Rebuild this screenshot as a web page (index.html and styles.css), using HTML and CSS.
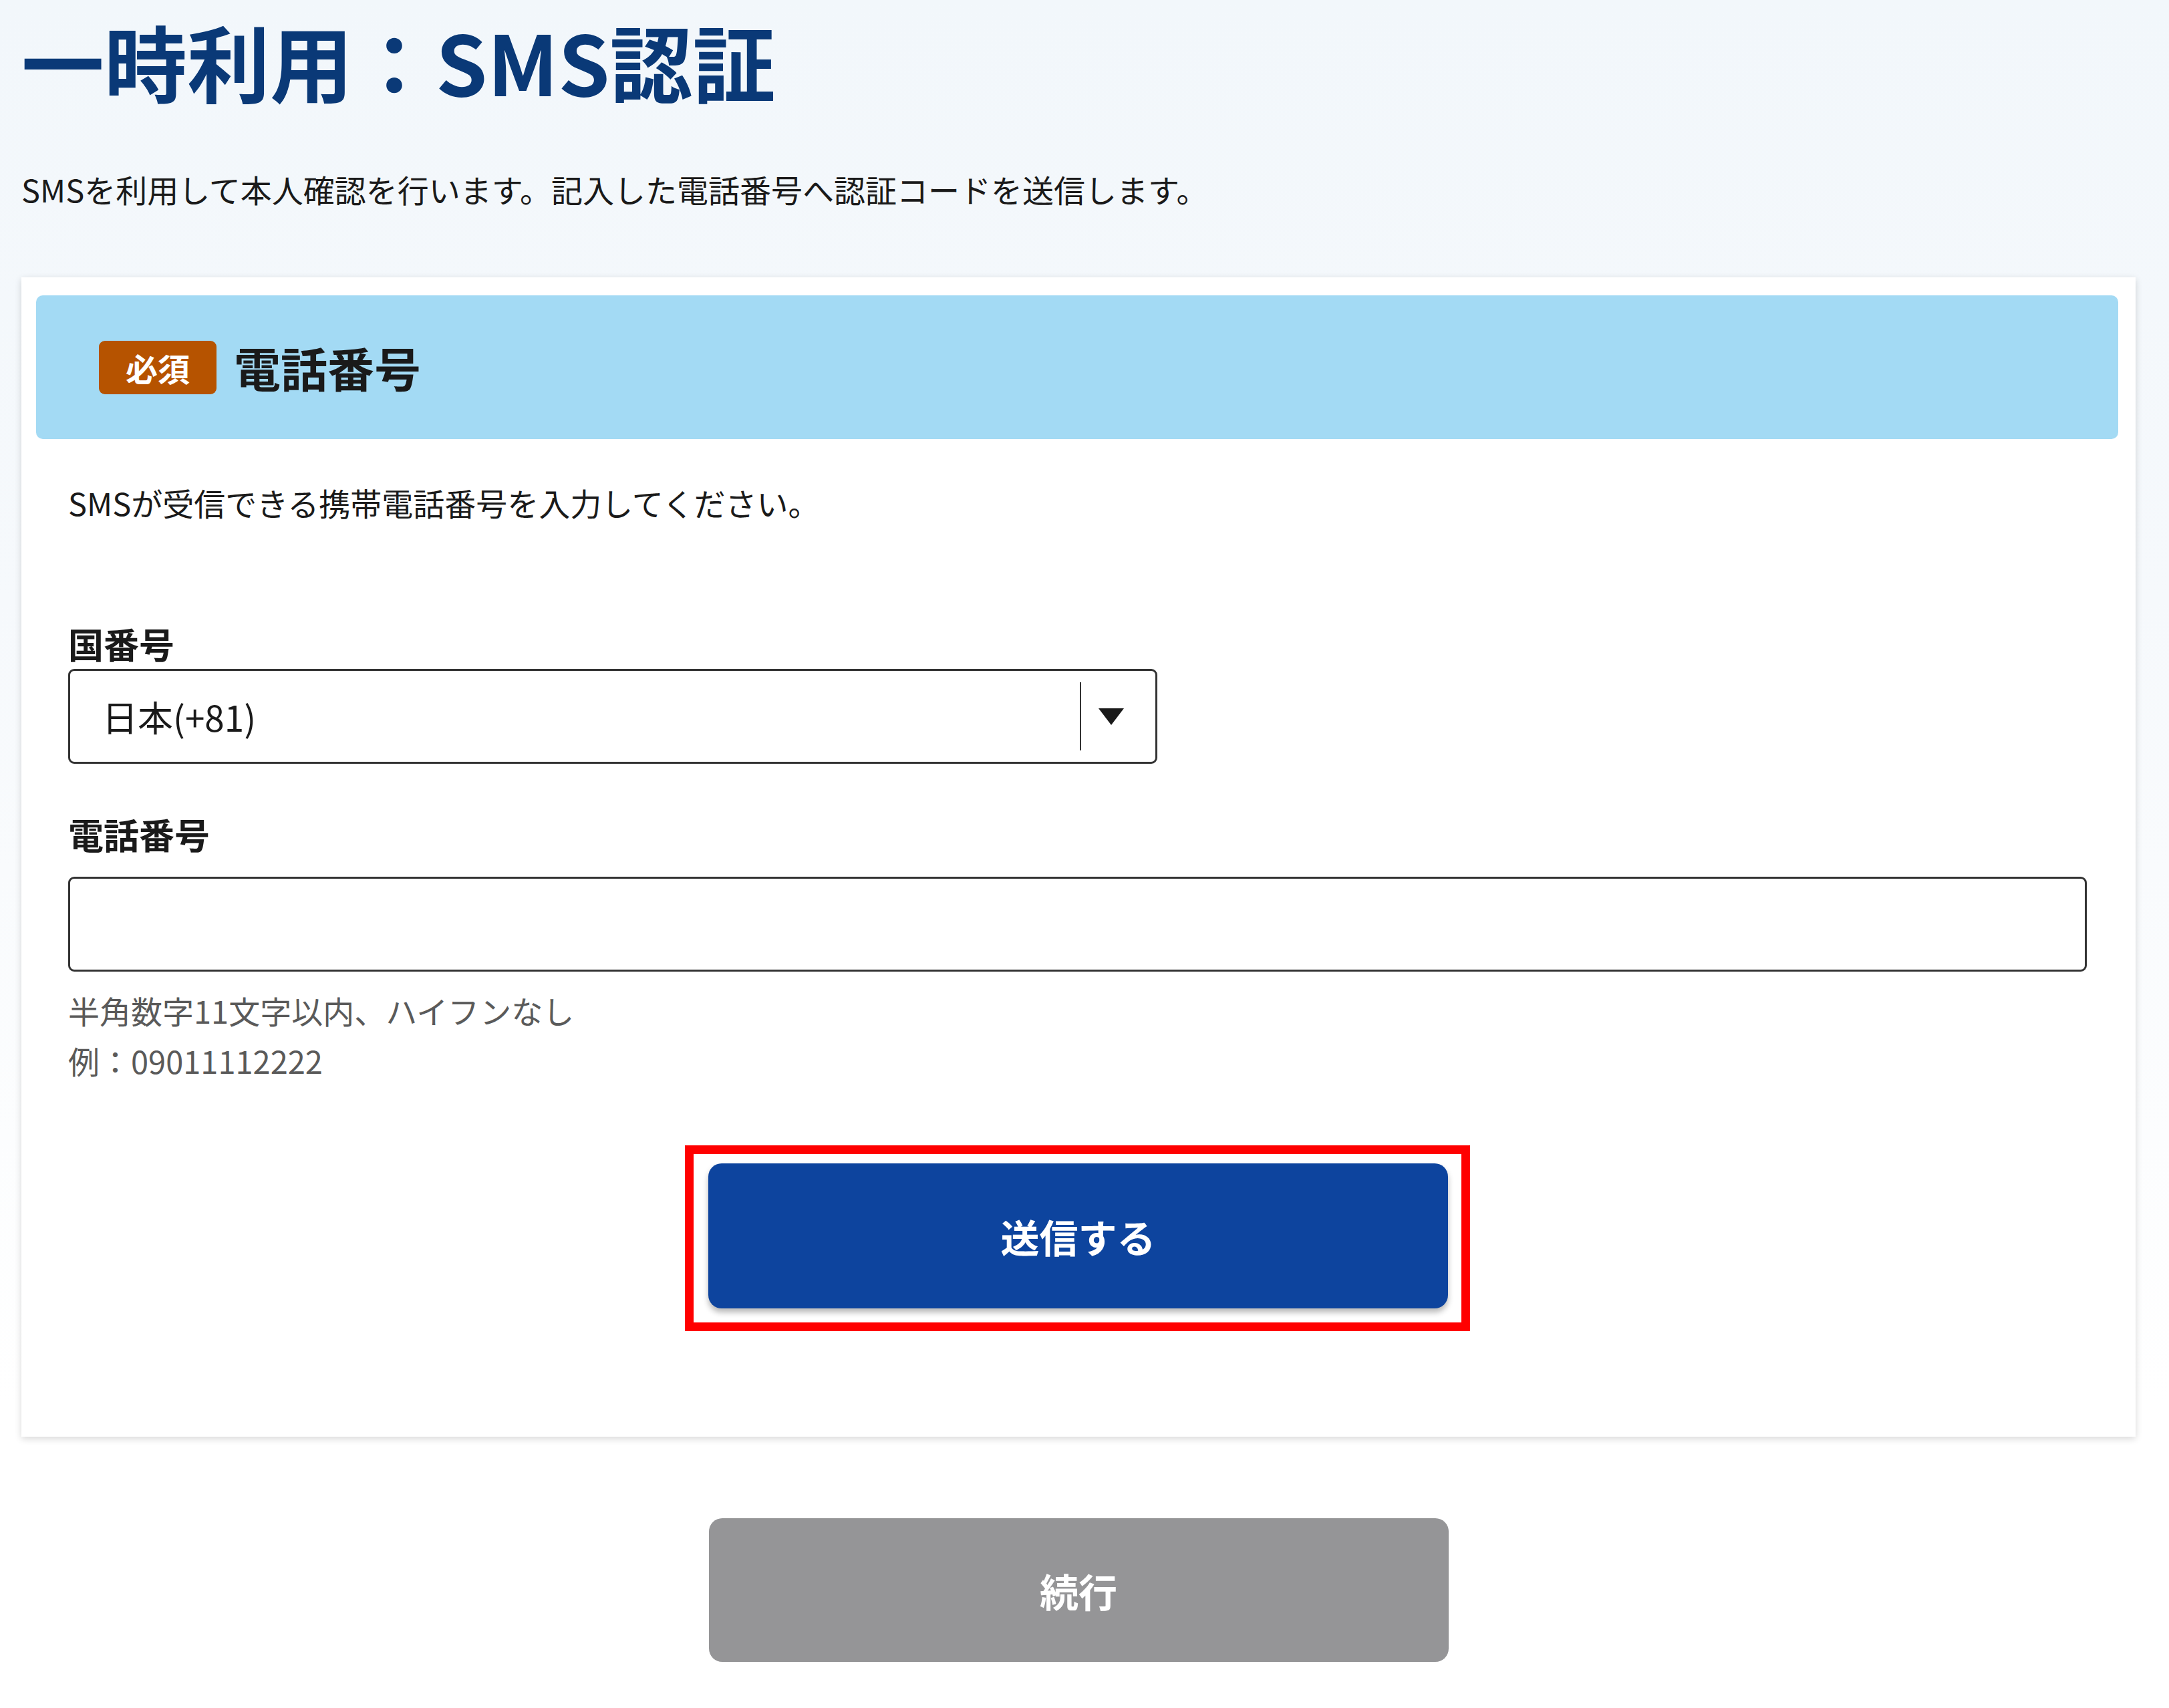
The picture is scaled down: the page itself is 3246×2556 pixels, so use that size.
FILE: index.html
```html
<!DOCTYPE html>
<html lang="ja">
<head>
<meta charset="utf-8" />
<title>一時利用：SMS認証</title>
<link rel="stylesheet" href="styles.css">
</head>
<body>
  <div class="page">
    <h1 class="title">一時利用：SMS認証</h1>
    <p class="lead">SMSを利用して本人確認を行います。記入した電話番号へ認証コードを送信します。</p>

    <section class="card">
      <div class="card-head">
        <span class="badge">必須</span>
        <h2 class="card-title">電話番号</h2>
      </div>
      <div class="card-body">
        <p class="note">SMSが受信できる携帯電話番号を入力してください。</p>

        <label class="field-label">国番号</label>
        <div class="select">
          <span class="select-value">日本(+81)</span>
          <span class="select-sep"></span>
          <span class="select-arrow"></span>
        </div>

        <label class="field-label phone-label" for="tel">電話番号</label>
        <input class="text-input" id="tel" type="text">
        <p class="hint">半角数字11文字以内、ハイフンなし<br>例：09011112222</p>

        <div class="actions">
          <div class="highlight">
            <button class="btn btn-primary" type="button">送信する</button>
          </div>
        </div>
      </div>
    </section>

    <div class="actions bottom">
      <button class="btn btn-disabled" type="button" disabled>続行</button>
    </div>
  </div>
</body>
</html>
```

FILE: styles.css
```css
html { height: 100%; }
body { margin: 0; min-height: 100%; font-family: "Noto Sans CJK JP", "Noto Sans", sans-serif; color: #1a1a1a; background: #fff linear-gradient(#f2f7fb 0, #f6f9fc 900px, #fff 2100px) no-repeat; }
.page { width: 3164px; margin-left: 32px; padding-bottom: 60px; }

.title { margin: 0; padding-top: 28px; font-size: 124px; line-height: 124px; font-weight: 700; color: #0a3977; }
.lead { margin: 96px 0 0; font-size: 47px; line-height: 69px; }

.card { margin-top: 98px; padding: 27px 26px 158px 22px; background: #fff; box-shadow: 0 3px 10px rgba(0, 0, 0, .16); }
.card-head { display: flex; align-items: center; height: 215px; padding-left: 94px; background: #a3daf4; border-radius: 10px; }
.badge { display: inline-flex; align-items: center; justify-content: center; height: 80px; padding: 0 40px; font-size: 48px; font-weight: 700; color: #fff; background: #b65300; border-radius: 9px; }
.card-title { margin: 0 0 0 26px; font-size: 70px; font-weight: 700; line-height: 1.2; color: #1a1a1a; }

.card-body { padding: 0 47px 0 48px; }
.note { margin: 60px 0 0; font-size: 47px; line-height: 69px; }

.field-label { display: block; margin-top: 139px; font-size: 53px; font-weight: 700; line-height: 76px; }
.phone-label { margin-top: 67px; margin-bottom: 26px; }

.select { display: flex; align-items: center; width: 1630px; height: 142px; box-sizing: border-box; padding-left: 48px; border: 3px solid #333; border-radius: 9px; background: #fff; }
.select-value { flex: 1; font-size: 53px; }
.select-sep { width: 2px; height: 102px; background: #333; }
.select-arrow { width: 0; height: 0; margin: 0 47px 0 26px; border-left: 19px solid transparent; border-right: 19px solid transparent; border-top: 25px solid #1a1a1a; }

.text-input { display: block; width: 100%; height: 142px; box-sizing: border-box; margin: 0; padding: 0 48px; border: 3px solid #333; border-radius: 9px; font: 53px "Noto Sans CJK JP", sans-serif; background: #fff; }

.hint { margin: 20px 0 0; font-size: 47px; line-height: 75px; color: #5a5a5a; }

.actions { display: flex; justify-content: center; }
.highlight { margin-top: 90px; padding: 14px 20px 21px 22px; border: 13px solid #f00; }
.bottom { margin-top: 122px; }

.btn { display: block; width: 1107px; height: 217px; border: 0; border-radius: 20px; font-family: "Noto Sans CJK JP", sans-serif; font-size: 58px; font-weight: 700; color: #fff; }
.btn-primary { background: #0d449e; box-shadow: 0 6px 9px rgba(0, 0, 0, .28); }
.btn-disabled { height: 215px; background: #959597; }
```
